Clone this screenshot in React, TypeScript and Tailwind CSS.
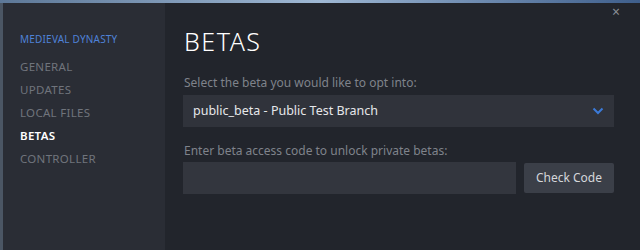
import React from 'react';

const navItems = ['GENERAL', 'UPDATES', 'LOCAL FILES', 'BETAS', 'CONTROLLER'];

export default function App() {
  return (
    <div
      className="w-[640px] h-[250px] flex flex-col bg-[#1d2026] overflow-hidden"
      style={{ fontFamily: '"Noto Sans", "Open Sans", Arial, sans-serif' }}
    >
      {/* window backdrop strip */}
      <div className="h-[3px] shrink-0 bg-gradient-to-r from-[#5d7898] via-[#9fb8d4] to-[#3f5f8c]" />
      <div className="flex flex-1">
        <div className="w-[3px] bg-[#4b5664]" />
        {/* Sidebar */}
        <div className="w-[162px] bg-[#2a2d35] pl-[17px] pt-[29px]">
          <div className="text-[10px] text-[#4f82d8] tracking-[0.2px] mb-[8px]">MEDIEVAL DYNASTY</div>
          <div className="flex flex-col">
            {navItems.map(item => (
              <div
                key={item}
                className={`h-[23px] leading-[23px] text-[11.5px] tracking-[0.3px] ${
                  item === 'BETAS' ? 'text-white font-semibold' : 'text-[#70747c]'
                }`}
              >
                {item}
              </div>
            ))}
          </div>
        </div>

        {/* Main */}
        <div className="relative flex-1 bg-[#22252c] pl-[18px] pr-[26px] pt-[21px]">
          <button className="absolute right-[20px] top-[2px] text-[#8a8e96] text-[14px] leading-none">×</button>
          <h1 className="text-[25px] font-light text-white tracking-[1.5px] leading-[34px] ml-[1px]">BETAS</h1>
          <div className="mt-[16px] text-[12px] text-[#7f838b] ml-[1px]">Select the beta you would like to opt into:</div>
          <div className="mt-[3px] h-[32px] bg-[#30333b] flex items-center justify-between pl-[10px] pr-[10px]">
            <span className="text-[12.5px] text-[#e6e7ea]">public_beta - Public Test Branch</span>
            <svg width="12" height="8" viewBox="0 0 12 8" fill="none">
              <path d="M1.5 1.5 L6 6 L10.5 1.5" stroke="#3b7ad8" strokeWidth="2" />
            </svg>
          </div>
          <div className="mt-[15px] text-[12px] text-[#7f838b] ml-[1px]">Enter beta access code to unlock private betas:</div>
          <div className="mt-[2px] flex gap-[8px] items-center">
            <div className="w-[333px] h-[32px] bg-[#33363e]" />
            <button className="w-[90px] h-[30px] bg-[#3b3f48] text-[12px] text-[#d5d7db] rounded-[2px]">Check Code</button>
          </div>
        </div>
      </div>
    </div>
  );
}
